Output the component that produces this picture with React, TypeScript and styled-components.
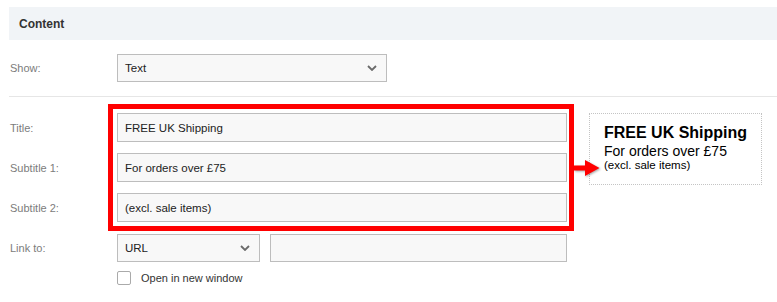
import React from 'react';
import styled, { createGlobalStyle } from 'styled-components';

const Global = createGlobalStyle`
  html, body { margin:0; padding:0; background:#fff; }
  body { font-family:"Liberation Sans", Arial, Helvetica, sans-serif; }
`;

const Page = styled.div` padding:7px 0 0 9px; width:768px; `;
const Header = styled.div`
  height:33px; display:flex; align-items:center; padding:0 10px;
  background:#f1f4f7; font-size:12px; font-weight:700; color:#333;
`;
const Row = styled.div<{ $top?: number }>`
  display:grid; grid-template-columns:108px auto; align-items:center;
  margin-top:${({ $top }) => $top ?? 0}px;
`;
const Label = styled.label` padding-left:1px; font-size:11px; color:#7c7c7c; `;
const Divider = styled.div` margin-top:14px; height:1px; background:#e6e6e6; `;

const Body = styled.div` display:flex; align-items:flex-start; margin-top:16px; `;
const Group = styled.div` position:relative; display:flex; flex-direction:column; gap:11px; `;

// annotation laid over the screenshot
const Highlight = styled.div`
  position:absolute; left:99px; top:-9px; width:466px; height:127px;
  box-sizing:border-box; border:5px solid #ff0000; pointer-events:none;
`;
const Arrow = styled.svg`
  position:absolute; left:565px; top:47px; overflow:visible;
  filter:drop-shadow(1px 1px 1px rgba(0,0,0,.35));
`;

const Input = styled.input<{ $w: number; $h?: number }>`
  box-sizing:border-box; width:${({ $w }) => $w}px; height:${({ $h }) => $h ?? 29}px;
  border:1px solid #bdbdbd; background:#f8f8f8; padding:0 7px; margin:0;
  font-family:"Liberation Sans", Arial, Helvetica, sans-serif; font-size:11.5px; color:#222;
  outline:none;
`;
const Select = styled.div<{ $w: number }>`
  box-sizing:border-box; width:${({ $w }) => $w}px; height:28px;
  display:flex; align-items:center; justify-content:space-between; padding:0 9px 0 7px;
  border:1px solid #bdbdbd; background:#f8f8f8; font-size:11.5px; color:#222;
`;
const Fields = styled.div` display:flex; gap:10px; `;

const Preview = styled.div`
  margin-left:22px; width:173px; height:72px; box-sizing:border-box;
  border:1px dotted #c4c4c4; padding:9px 0 0 14px; color:#000;
`;
const PTitle = styled.div` font-size:16px; font-weight:700; line-height:20px; `;
const PSub = styled.div` font-size:14px; line-height:16px; `;
const PSmall = styled.div` font-size:11.5px; line-height:13px; `;

const CheckRow = styled.div` display:flex; align-items:center; gap:10px; margin-top:9px; padding-left:108px; `;
const Box = styled.span`
  width:14px; height:14px; box-sizing:border-box; border:1px solid #aaa; border-radius:2px; background:#fff;
`;
const CheckText = styled.span` font-size:11px; color:#333; `;

function Chevron() {
  return (
    <svg width="10" height="6" viewBox="0 0 10 6">
      <path d="M1 1l4 4 4-4" fill="none" stroke="#6a6a6a" strokeWidth="1.8" />
    </svg>
  );
}

export default function App() {
  return (
    <Page>
      <Global />
      <Header>Content</Header>

      <Row $top={14}>
        <Label>Show:</Label>
        <Select $w={270}><span>Text</span><Chevron /></Select>
      </Row>

      <Divider />

      <Body>
        <Group>
          <Row>
            <Label>Title:</Label>
            <Input $w={450} readOnly defaultValue="FREE UK Shipping" />
          </Row>
          <Row>
            <Label>Subtitle 1:</Label>
            <Input $w={450} readOnly defaultValue="For orders over £75" />
          </Row>
          <Row>
            <Label>Subtitle 2:</Label>
            <Input $w={450} readOnly defaultValue="(excl. sale items)" />
          </Row>
          <Highlight />
          <Arrow width="26" height="16" viewBox="0 0 26 16">
            <rect x="0" y="5.5" width="12" height="5" fill="#ff0000" />
            <polygon points="11,0 25.5,8 11,16" fill="#ff0000" />
          </Arrow>
        </Group>

        <Preview>
          <PTitle>FREE UK Shipping</PTitle>
          <PSub>For orders over £75</PSub>
          <PSmall>(excl. sale items)</PSmall>
        </Preview>
      </Body>

      <Row $top={12}>
        <Label>Link to:</Label>
        <Fields>
          <Select $w={143}><span>URL</span><Chevron /></Select>
          <Input $w={297} $h={28} readOnly defaultValue="" />
        </Fields>
      </Row>

      <CheckRow>
        <Box />
        <CheckText>Open in new window</CheckText>
      </CheckRow>
    </Page>
  );
}
